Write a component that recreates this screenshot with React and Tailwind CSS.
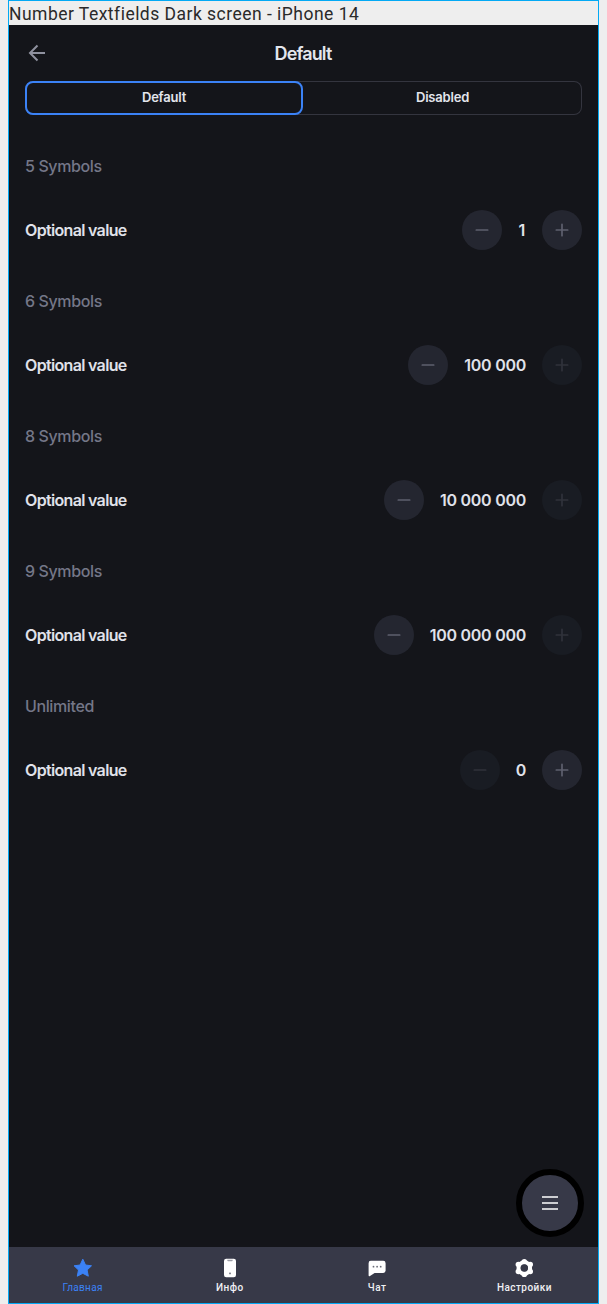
const sections = [
  { title: '5 Symbols', value: '1' },
  { title: '6 Symbols', value: '100 000', plusDisabled: true },
  { title: '8 Symbols', value: '10 000 000', plusDisabled: true },
  { title: '9 Symbols', value: '100 000 000', plusDisabled: true },
  { title: 'Unlimited', value: '0', minusDisabled: true },
];

function RoundButton({ plus, disabled }) {
  return (
    <button
      aria-label={plus ? 'Increase' : 'Decrease'}
      className={`flex size-10 shrink-0 items-center justify-center rounded-full ${
        disabled ? 'bg-[#191c23] text-[#30323b]' : 'bg-[#242630] text-[#5e606e]'
      }`}
    >
      <svg width="20" height="20" viewBox="0 0 20 20" fill="none" stroke="currentColor" strokeWidth="1.7" strokeLinecap="round">
        <path d={plus ? 'M4.3 10H15.7M10 4.3V15.7' : 'M4.3 10H15.7'} />
      </svg>
    </button>
  );
}

function Section({ title, value, plusDisabled, minusDisabled }) {
  return (
    <section className="h-[135px] pt-4">
      <h2 className="h-6 text-base leading-6 font-medium tracking-[-0.38px] text-[#747788]">{title}</h2>
      <div className="mt-8 flex h-10 items-center">
        <span className="flex-1 text-base leading-6 font-semibold tracking-[-0.67px] text-[#e0e2ea]">Optional value</span>
        <div className="flex items-center gap-4">
          <RoundButton disabled={minusDisabled} />
          <span className="min-w-[7.6px] text-base leading-6 font-semibold tracking-[-0.27px] whitespace-nowrap text-[#e0e2ea]">{value}</span>
          <RoundButton plus disabled={plusDisabled} />
        </div>
      </div>
    </section>
  );
}

function StarIcon() {
  return (
    <svg width="20" height="20" viewBox="0 0 20 20" fill="currentColor" stroke="currentColor" strokeWidth="1" strokeLinejoin="round">
      <path d="M9.8 1.2L12.5 7L18.5 7.8L14.1 12L15.3 18.2L9.8 15.3L4.3 18.2L5.5 12L1.1 7.8L7.1 7Z" />
    </svg>
  );
}

function PhoneIcon() {
  return (
    <svg width="20" height="20" viewBox="0 0 20 20">
      <rect x="4" y="0.8" width="12" height="18.4" rx="2.2" fill="white" />
      <path d="M7.3 1.8H12.7V2.3Q12.7 3.2 11.8 3.2H8.2Q7.3 3.2 7.3 2.3Z" fill="#9b9ca5" />
      <rect x="9.2" y="14.6" width="1.6" height="1.6" rx="0.5" fill="#6b6d79" />
    </svg>
  );
}

function ChatIcon() {
  return (
    <svg width="20" height="20" viewBox="0 0 20 20">
      <path d="M3.8 2.8H16.2Q18.6 2.8 18.6 5.2V12.6Q18.6 15 16.2 15H7.6L3 18Q1.6 18.7 1.6 17.2V5.2Q1.6 2.8 3.8 2.8Z" fill="white" />
      <g fill="#6b6d79">
        <circle cx="6.5" cy="8.7" r="0.9" />
        <circle cx="10.1" cy="8.7" r="0.9" />
        <circle cx="13.7" cy="8.7" r="0.9" />
      </g>
    </svg>
  );
}

function GearIcon() {
  return (
    <svg width="20" height="20" viewBox="0 0 20 20" fill="none">
      <circle cx="10.3" cy="10" r="5.7" stroke="white" strokeWidth="4.2" />
      <g fill="white">
        <circle cx="10.3" cy="3.6" r="2.7" />
        <circle cx="10.3" cy="16.4" r="2.7" />
        <circle cx="4.4" cy="6.5" r="2.8" />
        <circle cx="16.2" cy="6.5" r="2.8" />
        <circle cx="4.4" cy="13.5" r="2.8" />
        <circle cx="16.2" cy="13.5" r="2.8" />
      </g>
      <circle cx="10.3" cy="10" r="3.7" fill="#373948" />
    </svg>
  );
}

const tabs = [
  { label: 'Главная', Icon: StarIcon, active: true },
  { label: 'Инфо', Icon: PhoneIcon },
  { label: 'Чат', Icon: ChatIcon },
  { label: 'Настройки', Icon: GearIcon },
];

export default function App() {
  return (
    <div className="h-[1304px] w-[607px] bg-[#eeeeee] pr-2 pl-2 font-['Inter',sans-serif]">
      <div className="flex h-full w-[591px] flex-col border border-[#03a9f4]">
        <div className="h-6 shrink-0 font-['Roboto',sans-serif] text-[17.5px] leading-[26px] tracking-[0.48px] whitespace-nowrap text-[#2a2a2a]">
          Number Textfields Dark screen - iPhone 14
        </div>
        <div className="relative flex min-h-0 flex-1 flex-col bg-[#14151a]">
          <header className="flex h-14 shrink-0 items-center px-4">
            <svg width="24" height="24" viewBox="0 0 24 24" fill="none" stroke="#8f919f" strokeWidth="2">
              <path d="M20 12H5M12.5 4.5L5 12L12.5 19.5" />
            </svg>
            <h1 className="flex-1 pt-0.5 pr-px text-center text-lg leading-6 font-semibold tracking-[-0.87px] text-[#e3e5ed]">Default</h1>
            <div className="w-6" />
          </header>
          <div className="mx-4 flex h-[34px] shrink-0 rounded-lg text-[13px] font-semibold tracking-[-0.2px] text-[#e3e5ed] ring-1 ring-[#34353f] ring-inset">
            <button className="w-[278px] rounded-lg border-2 border-[#3b82f6]">Default</button>
            <button className="flex-1">Disabled</button>
          </div>
          <main className="flex-1 px-4 pt-[23px]">
            {sections.map((s) => (
              <Section key={s.title} {...s} />
            ))}
          </main>
          <button aria-label="Menu" className="absolute right-3.5 bottom-[66px] flex size-[68px] items-center justify-center rounded-full border-6 border-black bg-[#373948]">
            <svg width="16" height="14" viewBox="0 0 16 14" stroke="white" strokeWidth="1.7">
              <path d="M0 1H16M0 7H16M0 13H16" />
            </svg>
          </button>
          <nav className="grid h-14 shrink-0 grid-cols-4 bg-[#373948]">
            {tabs.map(({ label, Icon, active }) => (
              <a
                key={label}
                className={`flex flex-col items-center pt-[11px] font-['Roboto',sans-serif] text-[10px] leading-[19px] ${
                  active ? 'font-normal tracking-[0.35px] text-[#3b82f6]' : 'font-medium tracking-[0.45px] text-[#f0f0f3]'
                }`}
              >
                <Icon />
                <span>{label}</span>
              </a>
            ))}
          </nav>
        </div>
      </div>
    </div>
  );
}
